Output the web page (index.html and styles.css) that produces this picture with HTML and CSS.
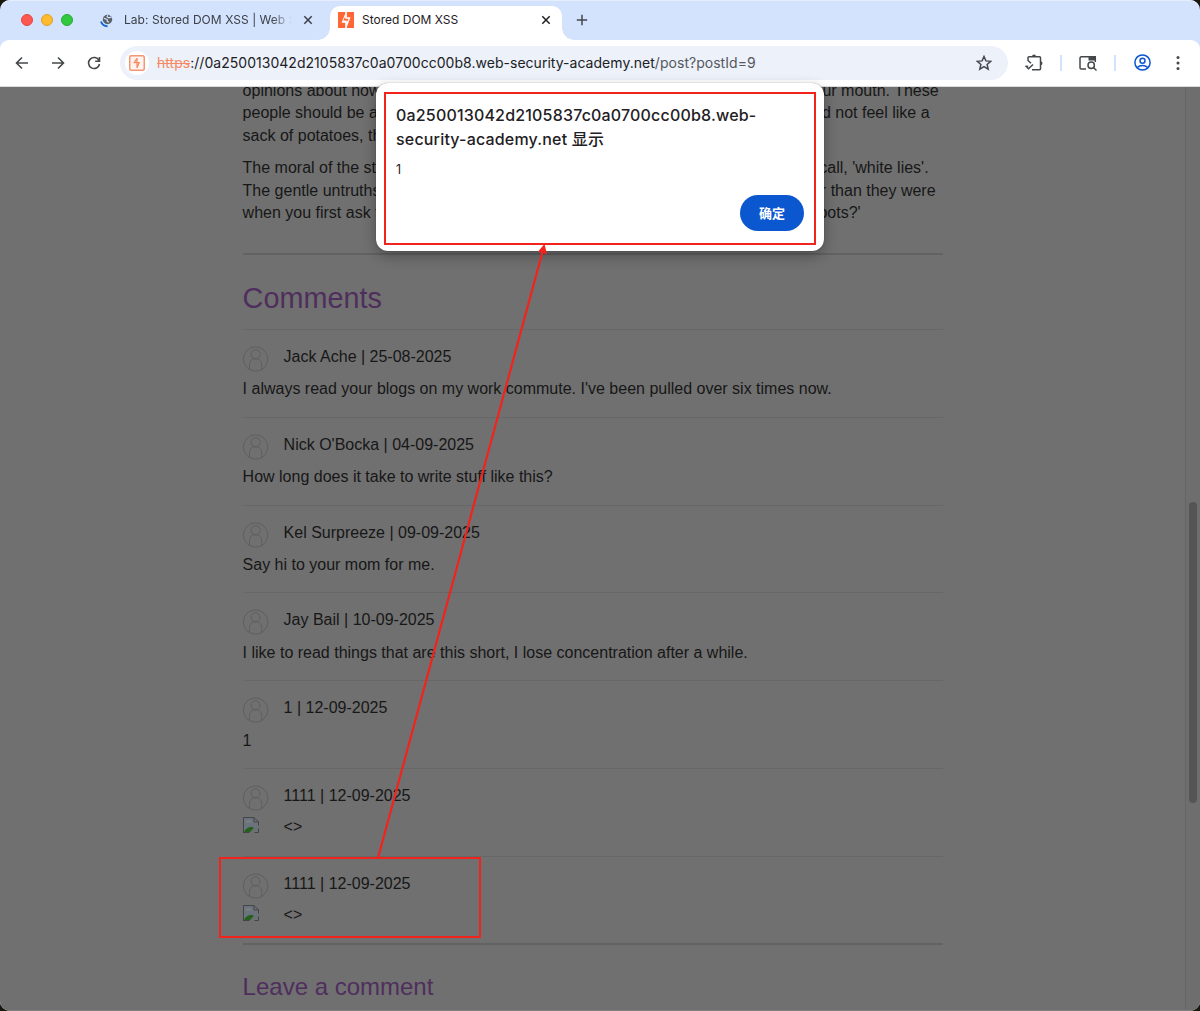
FILE: index.html
```html
<!DOCTYPE html>
<html lang="zh-CN">
<head>
    <meta charset="UTF-8">
    <meta name="viewport" content="width=device-width, initial-scale=1.0">
    <title>Stored DOM XSS</title>
    <link rel="stylesheet" href="styles.css">
</head>
<body>
    <svg class="defs" width="0" height="0">
        <symbol id="avatar" viewBox="0 0 26 26">
            <g fill="none" stroke="#5b5b5b" stroke-width="0.8">
                <circle cx="12.6" cy="13" r="12.2"/>
                <circle cx="12.6" cy="8.2" r="4.5"/>
                <path d="M6.5 24V19c0-4 2.5-6.3 6.1-6.3s6.1 2.3 6.1 6.3v5"/>
            </g>
        </symbol>
        <symbol id="broken" viewBox="0 0 16 16">
            <path fill="#6a737e" d="M.5.5h11l4 4v11H.5z"/>
            <path fill="#7d8080" d="M2.5 5.5a2 2 0 0 1 3-1.8 2 2 0 0 1 3 1.8z"/>
            <path fill="#27601a" d="M1 15c1-3 4-5 7-5 1.400 0 2.400.5 3 1l-4 4z"/>
            <path fill="#707070" d="M16 8.500V11l-5 5H7z"/>
            <path fill="#757575" d="M11 .5v4.500h4.500z"/>
            <path fill="none" stroke="#414548" d="M.5 15.500V.5h10.500l4.500 4.500v3.500M11 .5V5h4.500M0 15.500h6.500M11.500 15.500h4v-4"/>
        </symbol>
        <symbol id="close" viewBox="0 0 10 10">
            <path d="M1.300 1.300l7.400 7.400M8.700 1.300L1.300 8.700" fill="none" stroke="currentColor" stroke-width="1.500"/>
        </symbol>
    </svg>

    <div class="window">
        <div class="tabs">
            <div class="lights">
                <i class="red"></i><i class="yellow"></i><i class="green"></i>
            </div>
            <div class="tab">
                <svg width="16" height="16" viewBox="0 0 16 16">
                    <circle cx="9.500" cy="7.500" r="4.700" fill="#596068"/>
                    <path d="M5.800 6.300l3.200 1.100.4 2 1.500.8M9.800 3.200l-.7 1.500 1.700 1.200 2.500-.8" fill="none" stroke="#d3e2fd" stroke-width="1.200"/>
                    <path d="M3 9.500A7 7 0 0 0 9.500 14.300" fill="none" stroke="#1566d8" stroke-width="1.900"/>
                </svg>
                <span class="tab-title faded">Lab: Stored DOM XSS | Web S</span>
                <svg class="close" width="10" height="10"><use href="#close"/></svg>
            </div>
            <div class="tab active">
                <svg width="16" height="16" viewBox="0 0 16 16">
                    <path fill="#ff6633" d="M0 0h16v16H0z"/>
                    <path fill="#fff" d="M7.300 0h1.600v5.300h3.600L8.900 14.800V16H7.200v-5.300H3.500L7.300 1.500z"/>
                    <path fill="#ff6633" d="M7.300 4.300L5.300 8.500h3.400v1.700l2-3.400H7.300z"/>
                </svg>
                <span class="tab-title">Stored DOM XSS</span>
                <svg class="close" width="10" height="10"><use href="#close"/></svg>
            </div>
            <svg class="plus" width="12" height="12" viewBox="0 0 12 12"><path d="M6 .8v10.400M.8 6h10.400" stroke="#45484d" stroke-width="1.500"/></svg>
        </div>

        <div class="toolbar">
            <svg class="nav" width="14" height="14" viewBox="0 0 14 14"><path d="M13 7H2M7 1.500L1.500 7 7 12.500"/></svg>
            <svg class="nav" width="14" height="14" viewBox="0 0 14 14"><path d="M1 7h11M7 1.500L12.500 7 7 12.500"/></svg>
            <svg class="nav" width="14" height="14" viewBox="0 0 14 14"><path d="M12 4.500A5.500 5.500 0 1 0 12.500 8M12.500 1v4.300H8.200"/></svg>
            <div class="address">
                <span class="site">
                    <svg width="16" height="16" viewBox="0 0 16 16">
                        <rect x=".75" y=".75" width="14.500" height="14.500" rx="1.500" fill="#fff4ef" stroke="#f49672" stroke-width="1.500"/>
                        <path d="M8 3.200L5.200 7.700h5L8 12.800M8 3v4.500M8 8v5" fill="none" stroke="#f58a60" stroke-width="1.200"/>
                    </svg>
                </span>
                <span class="url"><s>https</s><b>://0a250013042d2105837c0a0700cc00b8.web-security-academy.net</b>/post?postId=9</span>
                <svg class="star" width="16" height="16" viewBox="0 0 16 16"><path d="M8 1.500l1.900 4.400 4.800.4-3.600 3.200 1.100 4.700L8 11.700l-4.200 2.500 1.100-4.700L1.300 6.300l4.800-.4z"/></svg>
            </div>
            <svg class="tool ext" width="20" height="18" viewBox="0 0 20 18"><path d="M4 6.800V3.800a1 1 0 0 1 1-1h10.500a1 1 0 0 1 1 1v11a1 1 0 0 1-1 1H8M1.500 12l3 2.700L9 10.500M4 6.500l3 2.800M1.500 12.200l2.700.3"/><path class="solid" d="M8 2.500a2 2 0 0 1 4 0zM16.500 7.300a2 2 0 0 1 0 4z"/></svg>
            <i class="sep"></i>
            <svg class="tool search" width="18" height="16" viewBox="0 0 18 16"><path d="M7 14H2.300a1.300 1.300 0 0 1-1.300-1.300V3.200A1.300 1.300 0 0 1 2.300 1.800H10M16.300 2v5"/><circle cx="12.200" cy="10.200" r="3.200"/><path d="M14.500 12.500l3 3"/><path class="solid" d="M9.500 1H17v4.500H9.500z"/></svg>
            <i class="sep"></i>
            <svg class="profile" width="17" height="17" viewBox="0 0 17 17"><circle cx="8.500" cy="8.500" r="7.600"/><circle cx="8.500" cy="6.800" r="2.500"/><path d="M3.300 13.500c2.800-2.700 7.600-2.700 10.400 0"/></svg>
            <svg class="dots" width="4" height="16" viewBox="0 0 4 16"><circle cx="2" cy="2.500" r="1.500"/><circle cx="2" cy="8" r="1.500"/><circle cx="2" cy="13.500" r="1.500"/></svg>
        </div>

        <div class="page">
            <div class="post">
                <div class="text">
                    <p class="l1"><span>opinions about how</span><span>your mouth. These</span></p>
                    <p class="l2"><span>people should be a</span><span>d not feel like a</span></p>
                    <p class="l3"><span>sack of potatoes, th</span></p>
                    <p class="l4 gap"><span>The moral of the st</span><span>call, 'white lies'.</span></p>
                    <p class="l5"><span>The gentle untruths</span><span>r than they were</span></p>
                    <p class="l6"><span>when you first ask t</span><span>oots?'</span></p>
                </div>
                <hr>
                <h1>Comments</h1>
                <section class="comment">
                    <div class="author"><svg><use href="#avatar"/></svg>Jack Ache | 25-08-2025</div>
                    <p>I always read your blogs on my work commute. I've been pulled over six times now.</p>
                </section>
                <section class="comment">
                    <div class="author"><svg><use href="#avatar"/></svg>Nick O'Bocka | 04-09-2025</div>
                    <p>How long does it take to write stuff like this?</p>
                </section>
                <section class="comment">
                    <div class="author"><svg><use href="#avatar"/></svg>Kel Surpreeze | 09-09-2025</div>
                    <p>Say hi to your mom for me.</p>
                </section>
                <section class="comment">
                    <div class="author"><svg><use href="#avatar"/></svg>Jay Bail | 10-09-2025</div>
                    <p>I like to read things that are this short, I lose concentration after a while.</p>
                </section>
                <section class="comment">
                    <div class="author"><svg><use href="#avatar"/></svg>1 | 12-09-2025</div>
                    <p>1</p>
                </section>
                <section class="comment">
                    <div class="author"><svg><use href="#avatar"/></svg>1111 | 12-09-2025</div>
                    <p class="payload"><svg><use href="#broken"/></svg>&lt;&gt;</p>
                </section>
                <section class="comment">
                    <div class="author"><svg><use href="#avatar"/></svg>1111 | 12-09-2025</div>
                    <p class="payload"><svg><use href="#broken"/></svg>&lt;&gt;</p>
                </section>
                <hr>
                <h2>Leave a comment</h2>
            </div>
            <div class="scrollbar"><div class="thumb"></div></div>
        </div>

        <div class="dialog">
            <div class="dialog-title">0a250013042d2105837c0a0700cc00b8.web-<br>security-academy.net 显示</div>
            <div class="dialog-text">1</div>
            <button>确定</button>
        </div>

        <div class="mark"></div>
        <svg class="arrow" width="1200" height="1011" viewBox="0 0 1200 1011">
            <path d="M378 858L543 250" stroke="#f2231d" stroke-width="2.200"/>
            <path d="M544.500 244l2.600 10.500-4.600-2-4.800-.5z" fill="#f2231d"/>
        </svg>
    </div>
</body>
</html>
```

FILE: styles.css
```css
*,
*::before,
*::after {
    box-sizing: border-box;
}
body {
    margin: 0;
    background-color: #17190f;
    font-family: Inter, "Noto Sans CJK SC", sans-serif;
}
.defs {
    position: absolute;
}
.window {
    position: relative;
    height: 1011px;
    display: flex;
    flex-direction: column;
    overflow: hidden;
    border-radius: 10px;
    background-color: #d3e2fd;
    box-shadow: inset 0 1px 0 #e6eefd;
}

/* tab strip */
.tabs {
    height: 40px;
    display: flex;
    align-items: flex-end;
    flex-shrink: 0;
}
.lights {
    display: flex;
    gap: 8px;
    width: 98px;
    padding-left: 21px;
    margin-bottom: 14px;
}
.lights i {
    width: 12px;
    height: 12px;
    border-radius: 50%;
}
.red {
    background-color: #fe5650;
    border: 1px solid #e44841;
}
.yellow {
    background-color: #fdbb2d;
    border: 1px solid #e0a124;
}
.green {
    background-color: #32c840;
    border: 1px solid #27ac32;
}
.tab {
    display: flex;
    align-items: center;
    width: 232px;
    height: 34px;
    padding: 0 11px 6px 0;
    color: #3c4045;
    font-size: 12px;
}
.tab > svg:first-child {
    margin-right: 10px;
}
.tab:not(.active) {
    padding-right: 13px;
    width: 228px;
}
.tab-title {
    flex: 1;
    margin-top: -2px;
    overflow: hidden;
    white-space: nowrap;
}
.faded {
    letter-spacing: 0.04px;
    -webkit-mask-image: linear-gradient(to right, #000 148px, transparent 168px);
    mask-image: linear-gradient(to right, #000 148px, transparent 168px);
}
.active {
    position: relative;
    margin-left: 4px;
    padding-left: 8px;
    background-color: #fff;
    color: #1f2023;
    border-radius: 10px 10px 0 0;
}
.active > svg:first-child {
    margin-right: 8px;
}
.active::before,
.active::after {
    content: "";
    position: absolute;
    bottom: 0;
    width: 12px;
    height: 12px;
}
.active::before {
    left: -12px;
    background: radial-gradient(circle at 0 0, transparent 11.5px, #fff 12px);
}
.active::after {
    right: -12px;
    background: radial-gradient(circle at 100% 0, transparent 11.5px, #fff 12px);
}
.plus {
    margin: 0 0 14px 14px;
}

/* toolbar */
.toolbar {
    display: flex;
    align-items: center;
    flex-shrink: 0;
    height: 47px;
    padding: 0 20px 1px 15px;
    background-color: #fff;
    border-bottom: 1px solid #dadada;
    border-radius: 9px 9px 0 0;
}
.nav {
    margin-right: 22px;
    fill: none;
    stroke: #45484b;
    stroke-width: 1.6;
}
.nav:nth-child(3) {
    margin-right: 19px;
}
.address {
    display: flex;
    align-items: center;
    width: 888px;
    height: 34px;
    padding: 0 16px 0 5px;
    background-color: #edf1fa;
    border-radius: 17px;
}
.site {
    display: flex;
    align-items: center;
    justify-content: center;
    width: 24px;
    height: 24px;
    margin-right: 8px;
    background-color: #fff;
    border-radius: 50%;
}
.url {
    flex: 1;
    color: #55585d;
    font-size: 14px;
    letter-spacing: 0.03px;
    white-space: nowrap;
}
.url s {
    color: #f58b62;
}
.url b {
    color: #202124;
    font-weight: 400;
}
.star,
.tool,
.profile {
    fill: none;
    stroke: #45484b;
    stroke-width: 1.5;
}
.solid {
    fill: #45484b;
    stroke: none;
}
.ext {
    margin-left: 16px;
}
.sep {
    width: 2px;
    height: 16px;
    margin-left: 16px;
    background-color: #d3e2fd;
}
.search {
    margin-left: 17px;
}
.search + .sep {
    margin-left: 17px;
}
.profile {
    margin-left: 18px;
    stroke: #0b57d0;
}
.dots {
    margin-left: auto;
    fill: #45484b;
}

/* dimmed page */
.page {
    flex: 1;
    display: flex;
    justify-content: space-between;
    overflow: hidden;
    background-color: #707070;
    border-bottom: 1px solid #808080;
    color: #171717;
    font: 16px/22.4px "Liberation Sans", Arial, sans-serif;
}
.post {
    width: 700px;
    margin-left: 242.6px;
}
.text {
    margin-top: -7px;
}
.text p {
    display: flex;
    justify-content: space-between;
    margin: 0;
    white-space: nowrap;
}
.text .gap {
    margin-top: 10px;
}
.text .l1 {
    width: 696px;
}
.text .l2 {
    width: 687px;
}
.text .l4 {
    width: 686px;
}
.text .l5 {
    width: 693px;
}
.text .l6 {
    width: 618px;
}
hr {
    height: 2px;
    margin: 28.6px 0 0;
    border: 0;
    background-color: #626262;
}
h1 {
    margin: 23px 0 11px;
    color: #4f2e5e;
    font-size: 28.8px;
    font-weight: 400;
    line-height: 40px;
}
h2 {
    margin: 24px 0 0;
    color: #4f2e5e;
    font-size: 24px;
    font-weight: 400;
    line-height: 35px;
}
.comment {
    height: 87.8px;
    padding-top: 16px;
    border-top: 1px solid #676767;
}
.comment + hr {
    margin-top: -1px;
}
.author {
    display: flex;
    height: 22.4px;
}
.author svg {
    width: 26px;
    height: 26px;
    margin-right: 15px;
    flex-shrink: 0;
}
.comment p {
    margin: 10px 0 0;
}
.comment .payload {
    display: flex;
    margin-top: 9px;
}
.payload svg {
    width: 16px;
    height: 16px;
    margin: 1px 25px 0 0;
}
.scrollbar {
    width: 15px;
    padding: 415px 3px 0;
    border-left: 1px solid #656565;
    background-color: #6e6e6e;
}
.thumb {
    width: 8px;
    height: 301px;
    border-radius: 4px;
    background-color: #555;
}

/* alert dialog */
.dialog {
    position: absolute;
    top: 83px;
    left: 376px;
    width: 448px;
    height: 168px;
    padding: 20px;
    border-radius: 12px;
    background-color: #fff;
    box-shadow: 0 0 1px rgba(0, 0, 0, 0.5), 0 5px 14px rgba(0, 0, 0, 0.3);
    color: #1f2023;
}
.dialog::after {
    content: "";
    position: absolute;
    top: 9px;
    left: 8px;
    width: 432px;
    height: 153px;
    border: 2px solid #f2231d;
}
.dialog-title {
    font-size: 16px;
    font-weight: 500;
    letter-spacing: 0.18px;
    line-height: 24px;
    white-space: nowrap;
}
.dialog-text {
    margin-top: 10px;
    font-size: 12.5px;
    line-height: 18px;
}
.dialog button {
    display: block;
    width: 64px;
    height: 36px;
    margin: 16px 0 0 auto;
    padding: 0 0 2px;
    border: 0;
    border-radius: 18px;
    background-color: #0b57d0;
    color: #fff;
    font: 700 13px "Noto Sans CJK SC", sans-serif;
}

/* red annotations */
.mark {
    position: absolute;
    top: 857px;
    left: 219px;
    width: 262px;
    height: 81px;
    border: 2px solid #f2231d;
}
.arrow {
    position: absolute;
    top: 0;
    left: 0;
}
```
